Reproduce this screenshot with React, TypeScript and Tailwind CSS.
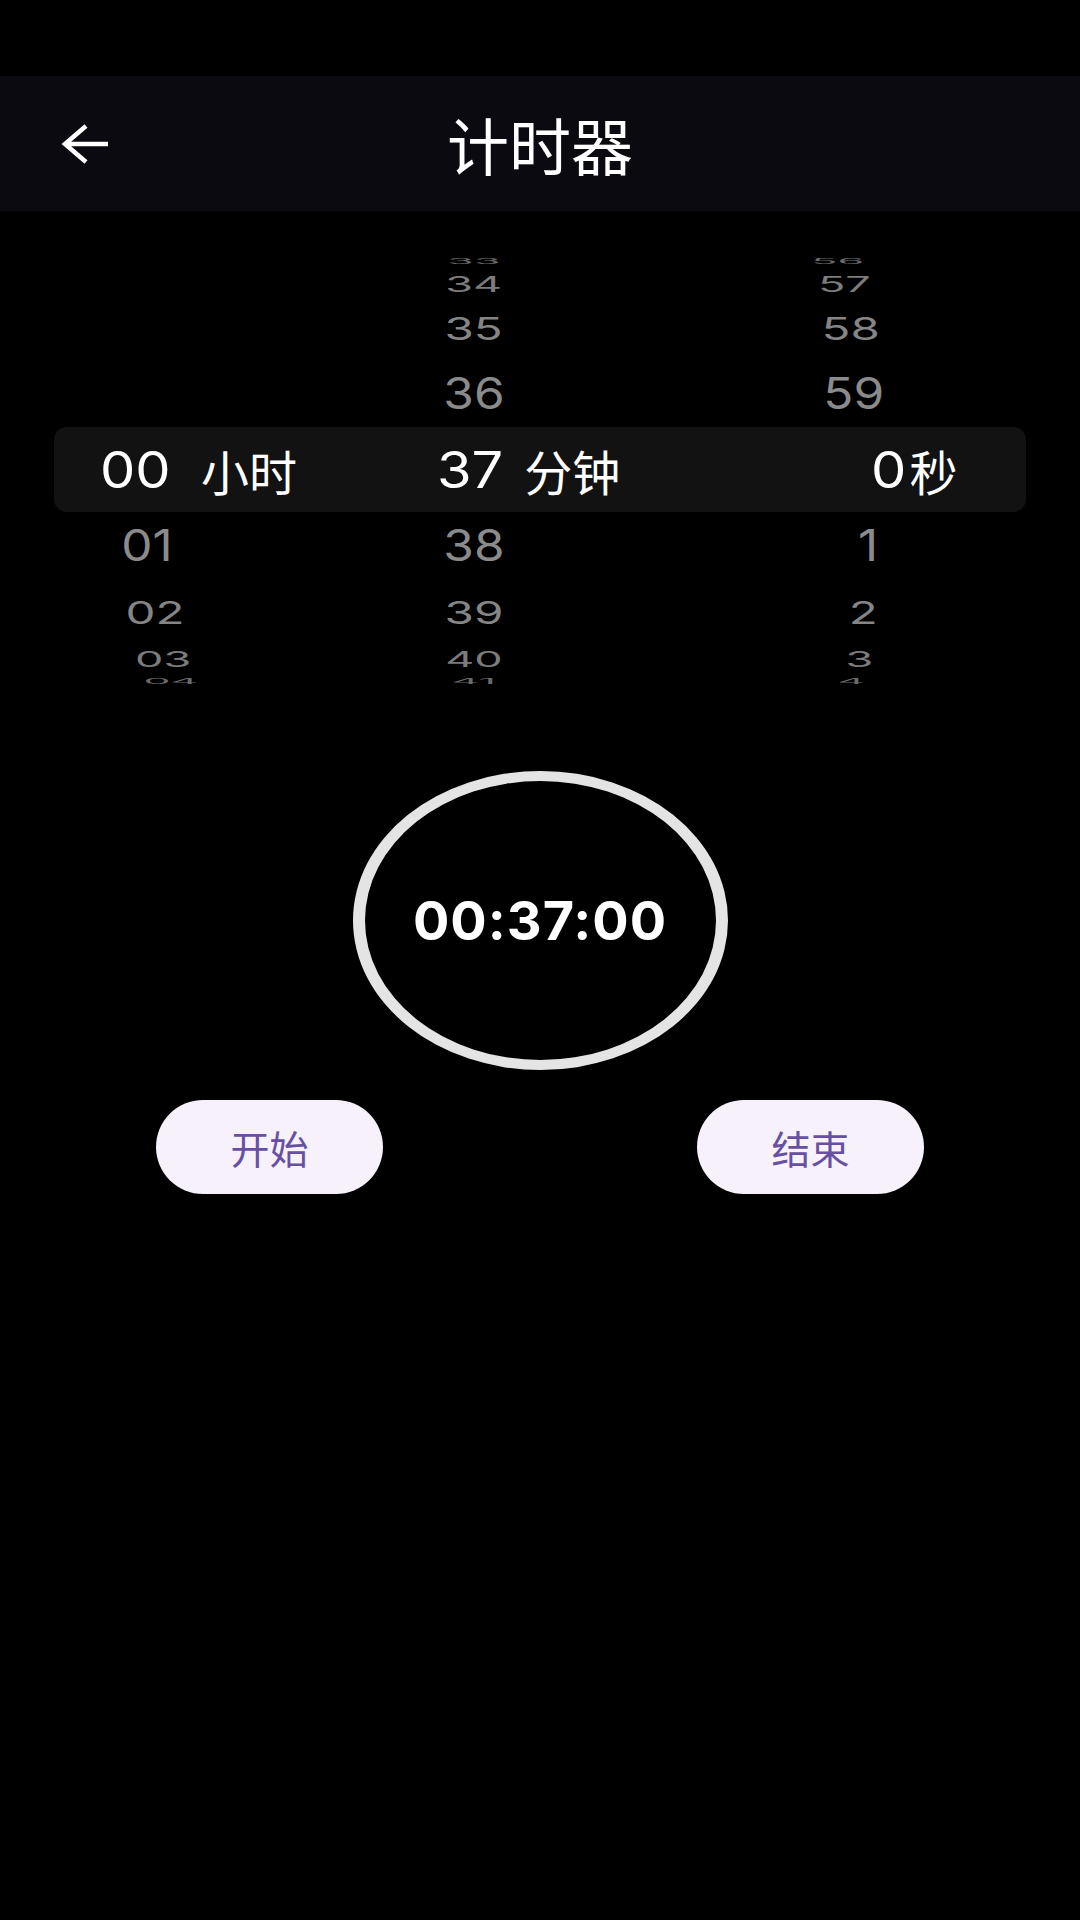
import type { ReactNode } from "react";

type Cell = { label: string; dx: string } | null;

type WheelRow = {
  h: string;
  look: string;
  hrs: Cell;
  mins: Cell;
  secs: Cell;
};

// 3D wheel: rows shrink and fade the farther they are from the selected band
const above: WheelRow[] = [
  {
    h: "h-[22px]",
    look: "scale-x-[0.86] scale-y-[0.14] text-[#6a6a6a]",
    hrs: null,
    mins: { label: "33", dx: "translate-x-0" },
    secs: { label: "56", dx: "-translate-x-[22px]" },
  },
  {
    h: "h-[34px]",
    look: "-translate-y-[5px] scale-x-[0.9] scale-y-[0.42] text-[#7c7c7c]",
    hrs: null,
    mins: { label: "34", dx: "translate-x-0" },
    secs: { label: "57", dx: "-translate-x-[16px]" },
  },
  {
    h: "h-[56px]",
    look: "-translate-y-[5px] scale-x-[0.95] scale-y-[0.63] text-[#858585]",
    hrs: null,
    mins: { label: "35", dx: "translate-x-0" },
    secs: { label: "58", dx: "-translate-x-[9px]" },
  },
  {
    h: "h-[65px]",
    look: "scale-x-[0.99] scale-y-[0.86] text-[#8b8b8b]",
    hrs: null,
    mins: { label: "36", dx: "translate-x-0" },
    secs: { label: "59", dx: "-translate-x-[6px]" },
  },
];

const below: WheelRow[] = [
  {
    h: "h-[69px]",
    look: "scale-x-[0.99] scale-y-[0.86] text-[#8b8b8b]",
    hrs: { label: "01", dx: "-translate-x-[3px]" },
    mins: { label: "38", dx: "translate-x-0" },
    secs: { label: "1", dx: "translate-x-[8px]" },
  },
  {
    h: "h-[55px]",
    look: "translate-y-[5px] scale-x-[0.95] scale-y-[0.63] text-[#858585]",
    hrs: { label: "02", dx: "translate-x-[5px]" },
    mins: { label: "39", dx: "translate-x-0" },
    secs: { label: "2", dx: "translate-x-[3px]" },
  },
  {
    h: "h-[34px]",
    look: "translate-y-[6px] scale-x-[0.9] scale-y-[0.42] text-[#7c7c7c]",
    hrs: { label: "03", dx: "translate-x-[13px]" },
    mins: { label: "40", dx: "translate-x-0" },
    secs: { label: "3", dx: "-translate-x-[1px]" },
  },
  {
    h: "h-[22px]",
    look: "scale-x-[0.86] scale-y-[0.14] text-[#6a6a6a]",
    hrs: { label: "04", dx: "translate-x-[21px]" },
    mins: { label: "41", dx: "translate-x-0" },
    secs: { label: "4", dx: "-translate-x-[9px]" },
  },
];

function Slot({ cell, look, className }: { cell: Cell; look: string; className: string }) {
  return (
    <div className={`flex w-[180px] items-center justify-center ${className}`}>
      {cell && (
        <span className={`inline-block ${cell.dx}`}>
          <span className={`inline-block leading-none ${look}`}>{cell.label}</span>
        </span>
      )}
    </div>
  );
}

function Row({ row }: { row: WheelRow }) {
  return (
    <div className={`flex items-center font-['Inter',sans-serif] text-[50px] ${row.h}`}>
      <Slot cell={row.hrs} look={row.look} className="ml-[60px]" />
      <Slot cell={row.mins} look={row.look} className="ml-[144px]" />
      <Slot cell={row.secs} look={row.look} className="ml-[206px]" />
    </div>
  );
}

function Pill({ children }: { children: ReactNode }) {
  return (
    <button className="flex h-[94px] w-[227px] items-center justify-center rounded-full bg-[#f6f1fa] text-[39px] leading-none text-[#6750a4]">
      {children}
    </button>
  );
}

export default function App() {
  const cjk = "font-['Noto_Sans_CJK_SC','Noto_Sans',sans-serif]";
  const num = "font-['Inter',sans-serif] inline-block origin-left scale-x-[1.12]";

  return (
    <div className={`min-h-screen w-full bg-black ${cjk}`}>
      <div className="h-[76px]" />

      <header className="grid h-[135px] grid-cols-[1fr_auto_1fr] items-center bg-[#0b0a10]">
        <button className="ml-[61px] flex h-[40px] w-[48px] items-center justify-self-start">
          <svg width="48" height="40" viewBox="0 0 48 40" fill="none">
            <path d="M47 20H4M25 2L4 20L25 38" stroke="white" strokeWidth="4.5" strokeLinejoin="miter" />
          </svg>
        </button>
        <h1 className="text-[62px] font-normal leading-none text-white">计时器</h1>
        <div />
      </header>

      <section className="mt-[39px]">
        {above.map((r, i) => (
          <Row key={`a${i}`} row={r} />
        ))}

        <div className="mx-[54px] flex h-[85px] items-center rounded-[13px] bg-[#121212] text-white">
          <div className="ml-[46px] flex w-[200px] items-center gap-[38px]">
            <span className={`${num} text-[50px] leading-none`}>00</span>
            <span className="text-[48px] leading-none">小时</span>
          </div>
          <div className="ml-[137px] flex w-[200px] items-center gap-[28px]">
            <span className={`${num} text-[50px] leading-none`}>37</span>
            <span className="text-[48px] leading-none">分钟</span>
          </div>
          <div className="ml-[234px] flex items-center gap-[7px]">
            <span className={`${num} text-[50px] leading-none`}>0</span>
            <span className="text-[48px] leading-none">秒</span>
          </div>
        </div>

        {below.map((r, i) => (
          <Row key={`b${i}`} row={r} />
        ))}
      </section>

      <div className="mx-auto mt-[79px] flex h-[299px] w-[375px] items-center justify-center rounded-[50%] border-x-[12px] border-y-[10px] border-[#e4e4e4]">
        <span className="font-['Inter',sans-serif] text-[54px] font-bold leading-none tracking-[1px] text-white">00:37:00</span>
      </div>

      <div className="mt-[30px] flex justify-between px-[156px]">
        <Pill>开始</Pill>
        <Pill>结束</Pill>
      </div>
    </div>
  );
}
